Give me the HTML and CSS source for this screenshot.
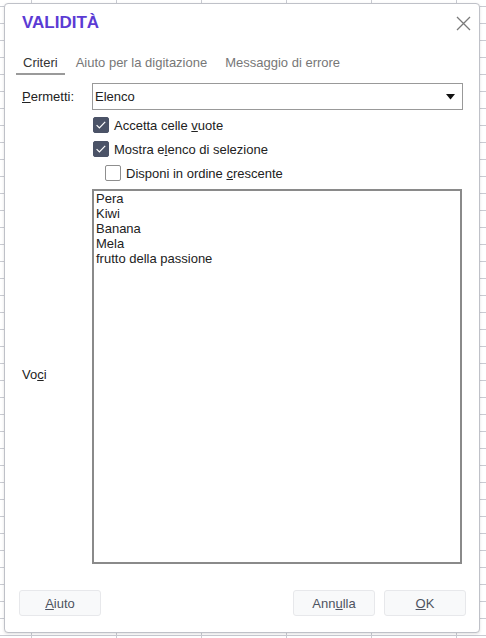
FILE: index.html
```html
<!DOCTYPE html>
<html lang="it">
<head>
<meta charset="utf-8">
<title>Validità</title>
<link rel="stylesheet" href="styles.css">
</head>
<body>
<div class="dialog">
  <div class="header">
    <h1 class="title">VALIDITÀ</h1>
    <button class="close" aria-label="Chiudi">
      <svg width="15" height="15" viewBox="0 0 15 15"><path d="M1 1 L14 14 M14 1 L1 14" stroke="#7a7a7a" stroke-width="1.3" fill="none"/></svg>
    </button>
  </div>
  <div class="tabs">
    <span class="tab active">Criteri</span>
    <span class="tab">Aiuto per la digitazione</span>
    <span class="tab">Messaggio di errore</span>
  </div>
  <div class="form">
    <label class="label"><u>P</u>ermetti:</label>
    <div class="select">
      <span>Elenco</span>
      <svg class="arrow" width="9" height="6" viewBox="0 0 9 6"><path d="M0 0 H9 L4.5 5.5 Z" fill="#111"/></svg>
    </div>
    <div class="checks">
      <div class="check">
        <span class="box on"><svg width="16" height="16" viewBox="0 0 16 16"><path d="M3.6 8.2 L6.4 11 L12.2 4.8" stroke="#fff" stroke-width="1.2" fill="none"/></svg></span>
        <span>Accetta celle <u>v</u>uote</span>
      </div>
      <div class="check">
        <span class="box on"><svg width="16" height="16" viewBox="0 0 16 16"><path d="M3.6 8.2 L6.4 11 L12.2 4.8" stroke="#fff" stroke-width="1.2" fill="none"/></svg></span>
        <span>Mostra e<u>l</u>enco di selezione</span>
      </div>
      <div class="check sub">
        <span class="box"></span>
        <span>Disponi in ordine <u>c</u>rescente</span>
      </div>
    </div>
    <label class="label voci">Vo<u>c</u>i</label>
    <div class="list">
      <div>Pera</div>
      <div>Kiwi</div>
      <div>Banana</div>
      <div>Mela</div>
      <div>frutto della passione</div>
    </div>
  </div>
  <div class="buttons">
    <button class="btn"><u>A</u>iuto</button>
    <span class="spacer"></span>
    <button class="btn">Ann<u>u</u>lla</button>
    <button class="btn"><u>O</u>K</button>
  </div>
</div>
</body>
</html>
```
FILE: styles.css
```css
html, body {
  margin: 0;
  padding: 0;
}
body {
  width: 486px;
  height: 638px;
  overflow: hidden;
  font-family: "Liberation Sans", Arial, sans-serif;
  font-size: 13px;
  color: #222;
  background-color: #fff;
  background-image:
    linear-gradient(to right, #c9cbd2 1px, transparent 1px),
    linear-gradient(to bottom, #c9cbd2 1px, transparent 1px);
  background-size: 85px 17px, 85px 17px;
  background-position: 31px 0, 0 6px;
}
.dialog {
  margin: 3px 0 0 4px;
  width: 476px;
  height: 630px;
  box-sizing: border-box;
  background: #fff;
  border: 1px solid #bfc1c8;
  border-radius: 4px;
  box-shadow: 0 1px 3px rgba(0,0,0,0.12);
  display: flex;
  flex-direction: column;
}
.header {
  display: flex;
  justify-content: space-between;
  align-items: flex-start;
  padding: 9px 8px 0 17px;
}
.title {
  margin: 0;
  font-size: 17px;
  line-height: 20px;
  font-weight: bold;
  color: #5b3bd4;
}
.close {
  border: 0;
  background: none;
  padding: 0;
  margin-top: 3px;
  width: 15px;
  height: 15px;
  display: block;
}
.close svg { display: block; }
.tabs {
  display: flex;
  gap: 4px;
  padding-left: 11px;
  margin-top: 22px;
}
.tab {
  padding: 0 7px 2px;
  line-height: 16px;
  color: #777;
  border-bottom: 2px solid transparent;
}
.tab.active {
  color: #333;
  border-bottom-color: #9a9a9a;
}
.form {
  display: grid;
  grid-template-columns: 70px 1fr;
  padding: 0 16px 0 17px;
  margin-top: 8px;
}
.label {
  align-self: center;
  color: #222;
}
.select {
  height: 27px;
  box-sizing: border-box;
  border: 1px solid #999;
  display: flex;
  align-items: center;
  justify-content: space-between;
  padding: 0 7px 0 2px;
}
.select .arrow { display: block; }
.checks {
  grid-column: 2;
  padding-top: 3px;
}
.check {
  display: flex;
  align-items: center;
  gap: 5px;
  height: 24px;
  padding-left: 1px;
}
.check.sub { padding-left: 13px; }
.box {
  width: 16px;
  height: 16px;
  box-sizing: border-box;
  border-radius: 2px;
  border: 1px solid #8e8e8e;
  background: #fff;
  flex: none;
}
.box.on {
  background: #4b5367;
  border-color: #4b5367;
}
.box svg {
  display: block;
  margin: -1px;
}
.list {
  margin-top: 4px;
  width: 370px;
  height: 375px;
  box-sizing: border-box;
  border: 2px solid #8a8a8a;
  padding: 0 2px;
  line-height: 15px;
}
.buttons {
  display: flex;
  gap: 9px;
  margin-top: 26px;
  padding: 0 13px 0 14px;
}
.spacer { flex: 1; }
.btn {
  width: 82px;
  height: 26px;
  box-sizing: border-box;
  font-family: "Liberation Sans", Arial, sans-serif;
  font-size: 13px;
  color: #4e5360;
  background: #f8f9fa;
  border: 1px solid #e7e8eb;
  border-radius: 3px;
  padding: 0;
}
```
